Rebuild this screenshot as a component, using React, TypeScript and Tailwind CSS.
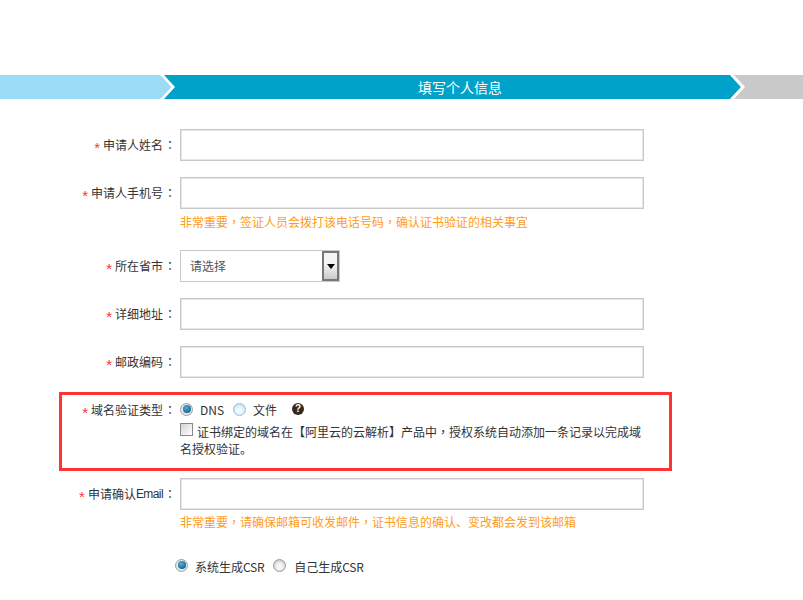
import { ReactNode } from "react";

const cjk = "font-['Noto_Sans_CJK_SC','Liberation_Sans',sans-serif]";

function P({ children }: { children: ReactNode }) {
  // centred full-width punctuation
  return <span className="font-['Noto_Sans_CJK_TC',sans-serif]">{children}</span>;
}

function Chevron({ fill }: { fill: string }) {
  return (
    <svg
      className="absolute right-[-17px] top-0 z-10"
      width="18"
      height="24"
      viewBox="0 0 18 24"
    >
      <path d="M0 0L11 12L0 24Z" fill={fill} />
      <path d="M0 0H4L15 12L4 24H0L11 12Z" fill="#fff" />
    </svg>
  );
}

function Label({
  text,
  wide,
  className,
}: {
  text: ReactNode;
  wide?: boolean;
  className?: string;
}) {
  return (
    <label
      className={`flex shrink-0 justify-end text-[#333] ${
        wide ? "w-[113px]" : "w-[175px]"
      } ${className ?? "items-center"}`}
    >
      <span className="relative top-[2px] mr-[3px] font-['Liberation_Sans'] text-[15px] leading-none text-[#f33]">
        *
      </span>
      {text}
      <span className="relative left-[1px]">
        <P>：</P>
      </span>
    </label>
  );
}

function Field({ text }: { text: ReactNode }) {
  return (
    <div className="flex h-8 items-center">
      <Label text={text} />
      <input
        type="text"
        className="ml-[5px] h-8 w-[464px] border border-[#c8c8c8] shadow-[inset_0_0_0_1px_#e6e6e6] outline-none"
      />
    </div>
  );
}

function Hint({ children }: { children: ReactNode }) {
  return (
    <p className="ml-[180px] text-[12px] leading-[18px] text-[#ff9c1a]">
      {children}
    </p>
  );
}

function Radio({ checked, className }: { checked?: boolean; className?: string }) {
  return (
    <span
      className={`relative flex h-[13px] w-[13px] shrink-0 items-center justify-center rounded-full border ${
        checked
          ? "border-[#9aa3a8] bg-[#e4e6e8]"
          : "border-[#9dbdd4] bg-[radial-gradient(circle_at_50%_60%,#f0f9fe_30%,#a8d6f2)]"
      } ${className ?? ""}`}
    >
      {checked && (
        <span className="h-[8px] w-[8px] rounded-full bg-[radial-gradient(circle_at_40%_35%,#4fb0de,#0c4a72)]" />
      )}
    </span>
  );
}

export default function App() {
  return (
    <div className={`h-[600px] w-[803px] overflow-hidden bg-white pt-[75px] text-[12px] ${cjk}`}>
      <div className="flex h-6">
        <div className="relative w-[161px] bg-[#9bdcf6]">
          <Chevron fill="#9bdcf6" />
        </div>
        <div className="relative flex w-[570px] items-center bg-[#00a2c9] pl-[257px] text-[14px] text-white">
          填写个人信息
          <Chevron fill="#00a2c9" />
        </div>
        <div className="flex-1 bg-[#c9c9c9]" />
      </div>

      <div className="mt-[30px]">
        <Field text="申请人姓名" />
      </div>
      <div className="mt-4">
        <Field text="申请人手机号" />
      </div>
      <div className="mt-[4px]">
        <Hint>
          非常重要<P>，</P>签证人员会拨打该电话号码<P>，</P>确认证书验证的相关事宜
        </Hint>
      </div>

      <div className="mt-[19px] flex h-8 items-center">
        <Label text="所在省市" />
        <div className="ml-[5px] flex h-8 w-[160px] items-center justify-between border border-[#c8c8c8] pl-[9px] text-[#555]">
          请选择
          <span className="flex h-[30px] w-[17px] items-center justify-center border-2 border-[#777] bg-gradient-to-b from-[#f4f4f4] from-45% to-[#cacaca]">
            <span className="h-0 w-0 border-x-[4px] border-t-[5px] border-x-transparent border-t-black" />
          </span>
        </div>
      </div>

      <div className="mt-4">
        <Field text="详细地址" />
      </div>
      <div className="mt-4">
        <Field text="邮政编码" />
      </div>

      <div className="ml-[59px] mt-[14px] flex h-[79px] w-[613px] border-[3px] border-[#f33] pt-[6px]">
        <Label text="域名验证类型" wide className="h-[18px] items-center" />
        <div className="ml-[5px] h-fit w-[466px]">
          <div className="flex h-[18px] items-center">
            <Radio checked className="-top-[1px]" />
            <span className="ml-[7px] text-[#333]">DNS</span>
            <Radio className="-top-[1px] ml-[9px]" />
            <span className="ml-[7px] text-[#333]">文件</span>
            <span className="relative -top-[1px] ml-[15px] flex h-3 w-3 items-center justify-center rounded-full bg-[#33291f] font-['Liberation_Sans'] text-[10px] font-bold leading-none text-white">
              ?
            </span>
          </div>
          <div className="mt-[4px] leading-[17px] text-[#333]">
            <span className="mr-[4px] inline-block h-[13px] w-[13px] border border-[#888] bg-gradient-to-br from-[#d4d4d4] to-white align-[1px]" />
            证书绑定的域名在【阿里云的云解析】产品中<P>，</P>授权系统自动添加一条记录以完成域
            <br />
            名授权验证。
          </div>
        </div>
      </div>

      <div className="mt-[7px]">
        <Field
          text={
            <>
              申请确认
              <span className="font-['Liberation_Sans'] tracking-[-0.6px]">Email</span>
            </>
          }
        />
      </div>
      <div className="mt-[3px]">
        <Hint>
          非常重要<P>，</P>请确保邮箱可收发邮件<P>，</P>证书信息的确认、变改都会发到该邮箱
        </Hint>
      </div>

      <div className="ml-[175px] mt-[27px] flex h-[18px] items-center text-[#333]">
        <Radio checked className="-top-[2px]" />
        <span className="ml-[7px]">
          系统生成<span className="tracking-[-0.3px]">CSR</span>
        </span>
        <span className="relative -top-[2px] ml-[9px] h-[13px] w-[13px] rounded-full border border-[#999] bg-[radial-gradient(circle_at_50%_60%,#f6f6f6_30%,#b8b8b8)]" />
        <span className="ml-[8px]">
          自己生成<span className="tracking-[-0.3px]">CSR</span>
        </span>
      </div>
    </div>
  );
}
